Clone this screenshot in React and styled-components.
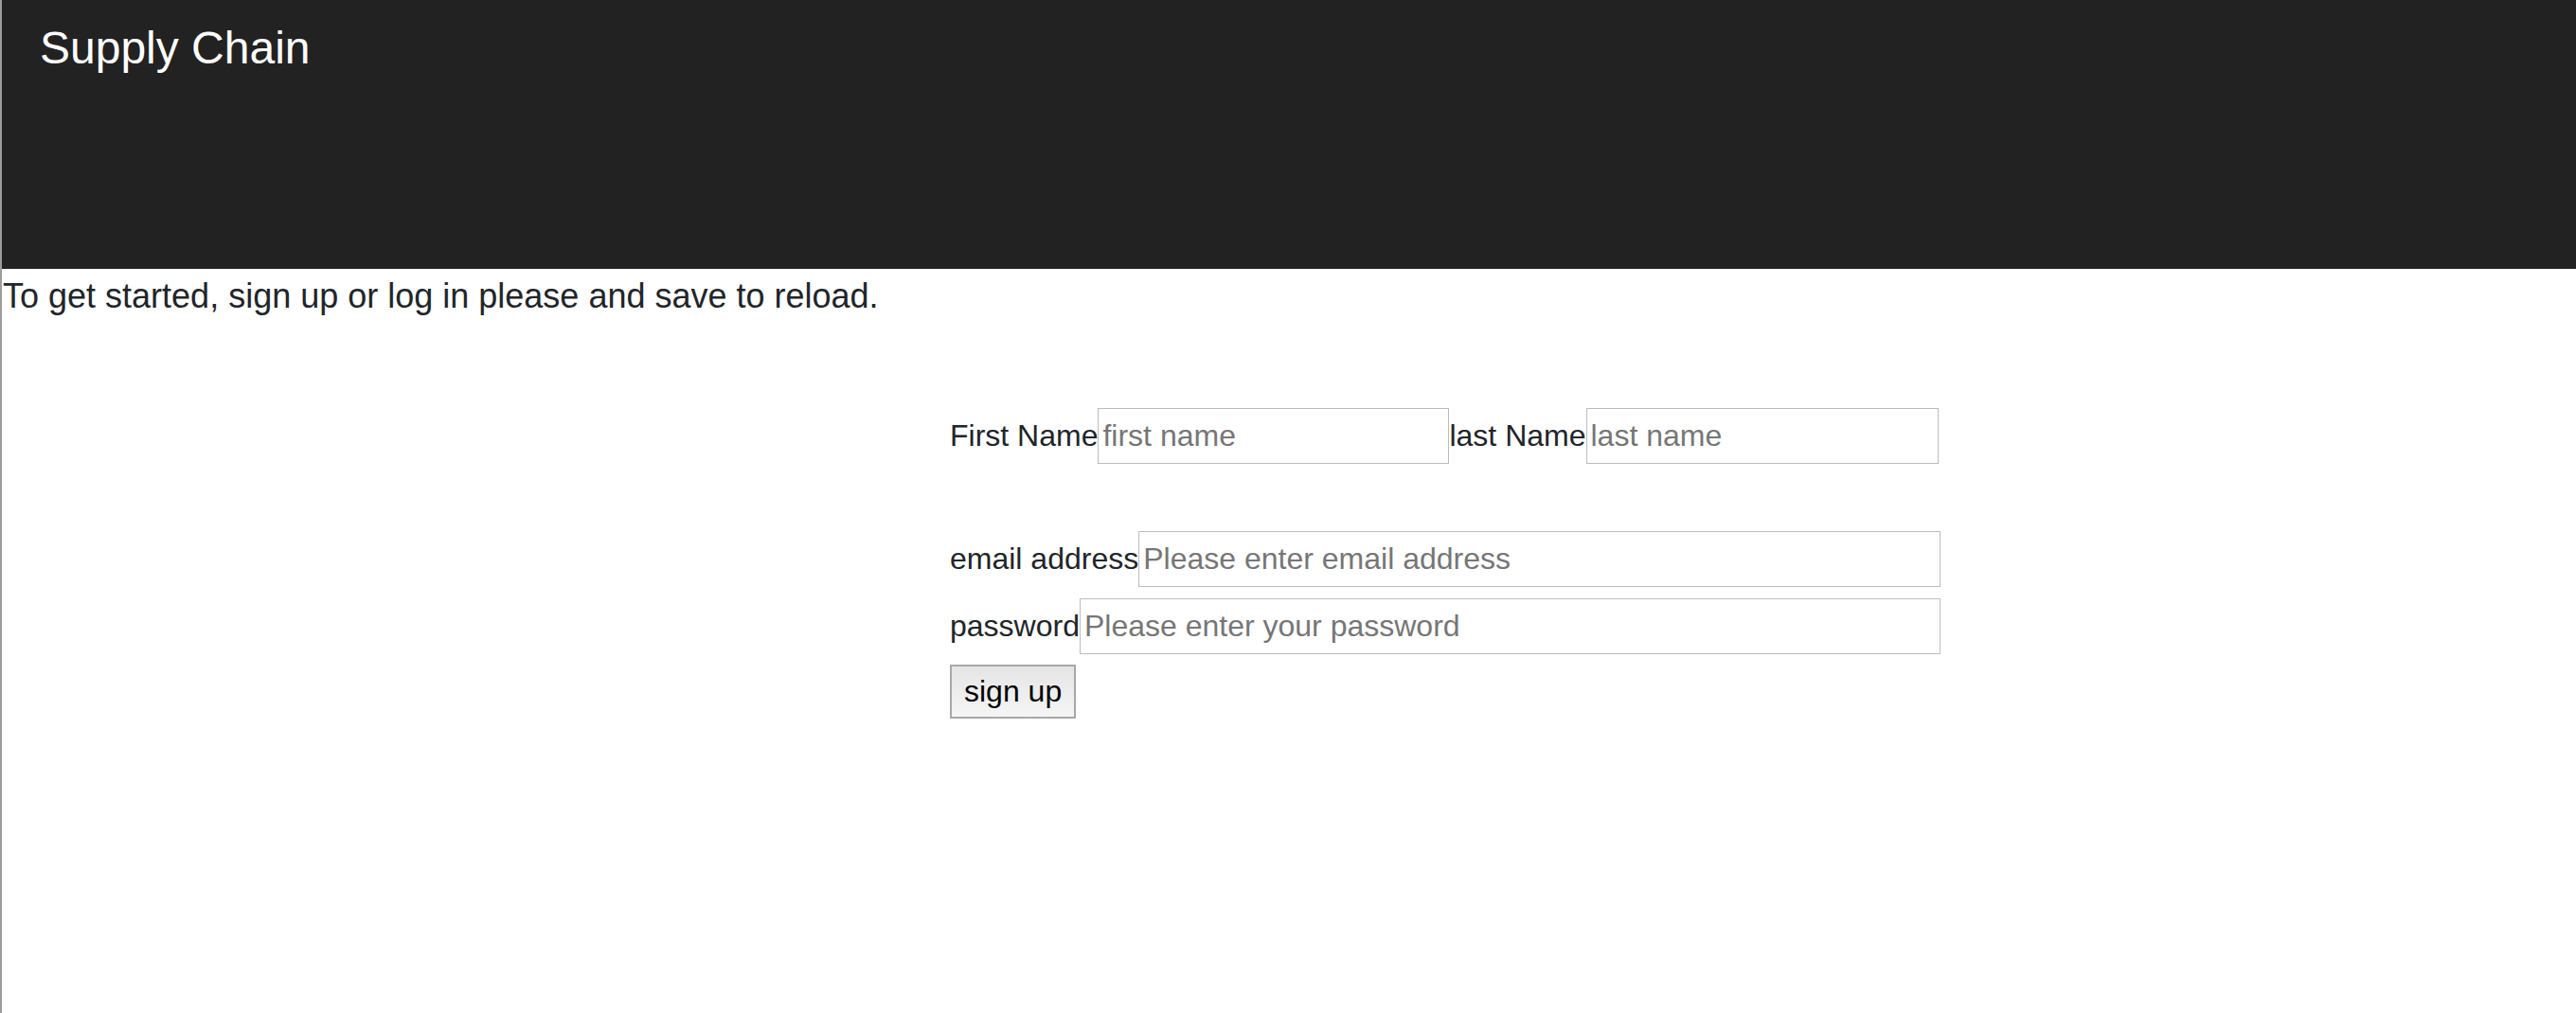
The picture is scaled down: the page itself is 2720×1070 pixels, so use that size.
import React from "react";
import styled, { createGlobalStyle } from "styled-components";

const GlobalStyle = createGlobalStyle`
  html, body {
    margin: 0;
    padding: 0;
    background: #ffffff;
  }
  body {
    font-family: "Liberation Sans", Arial, Helvetica, sans-serif;
    color: #212529;
  }
  * { box-sizing: border-box; }
`;

const Page = styled.div`
  min-height: 100vh;
  border-left: 2px solid #9c9c9c;
  background: #fff;
`;

const Header = styled.header`
  height: 284px;
  background: #222222;
  padding: 22px 0 0 40px;
`;

const Title = styled.h1`
  margin: 0;
  font-size: 48px;
  font-weight: 400;
  line-height: 57px;
  color: #ffffff;
`;

const Intro = styled.p`
  margin: 0;
  padding: 2px 0 0 1px;
  font-size: 36px;
  line-height: 54px;
  color: #212529;
`;

const Form = styled.form`
  width: 1046px;
  margin: 91px 0 0 1001px;
  display: flex;
  flex-direction: column;
  align-items: stretch;
`;

const Row = styled.div`
  display: flex;
  align-items: center;
  margin-bottom: ${(p) => p.$gap}px;
`;

const Label = styled.label`
  font-size: 32px;
  line-height: 37px;
  color: #212529;
  white-space: nowrap;
`;

const Input = styled.input`
  height: 59px;
  width: ${(p) => (p.$w ? `${p.$w}px` : "auto")};
  flex: ${(p) => (p.$w ? "0 0 auto" : "1 1 auto")};
  min-width: 0;
  margin: 0;
  padding: 0 4px;
  border: 1px solid #bdbdbd;
  border-radius: 0;
  background: #fff;
  font-family: "Liberation Sans", Arial, Helvetica, sans-serif;
  font-size: 32px;
  color: #212529;
  outline: none;
  &::placeholder {
    color: #767676;
    opacity: 1;
  }
`;

const Button = styled.button`
  align-self: flex-start;
  height: 57px;
  margin: 0;
  padding: 0 13px;
  border: 2px solid #a8a8a8;
  border-radius: 0;
  background: linear-gradient(to bottom, #e5e5e5, #f5f5f5);
  font-family: "Liberation Sans", Arial, Helvetica, sans-serif;
  font-size: 32px;
  color: #000;
  cursor: pointer;
`;

export default function App() {
  return (
    <>
      <GlobalStyle />
      <Page>
        <Header>
          <Title>Supply Chain</Title>
        </Header>
        <Intro>To get started, sign up or log in please and save to reload.</Intro>
        <Form onSubmit={(e) => e.preventDefault()}>
          <Row $gap={71}>
            <Label htmlFor="fn">First Name</Label>
            <Input id="fn" $w={371} placeholder="first name" />
            <Label htmlFor="ln">last Name</Label>
            <Input id="ln" $w={372} placeholder="last name" />
          </Row>
          <Row $gap={12}>
            <Label htmlFor="em">email address</Label>
            <Input id="em" placeholder="Please enter email address" />
          </Row>
          <Row $gap={11}>
            <Label htmlFor="pw">password</Label>
            <Input id="pw" type="password" placeholder="Please enter your password" />
          </Row>
          <Button type="submit">sign up</Button>
        </Form>
      </Page>
    </>
  );
}
